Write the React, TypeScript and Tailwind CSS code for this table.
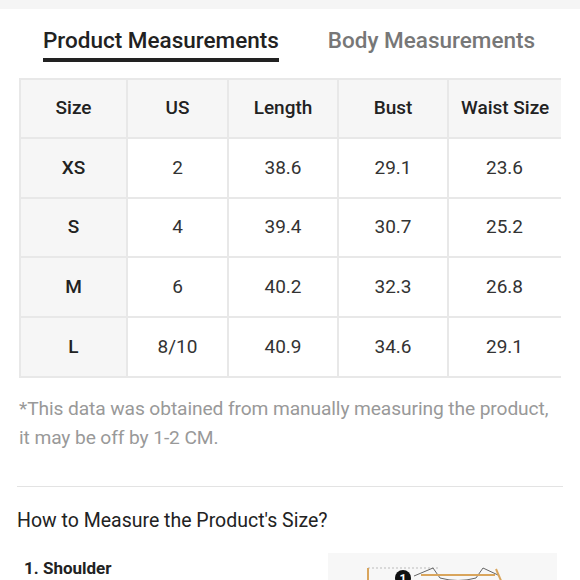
import React from "react";

const rows = [
  ["XS", "2", "38.6", "29.1", "23.6"],
  ["S", "4", "39.4", "30.7", "25.2"],
  ["M", "6", "40.2", "32.3", "26.8"],
  ["L", "8/10", "40.9", "34.6", "29.1"],
];

export default function App() {
  return (
    <div className="w-[580px] h-[580px] overflow-hidden bg-white" style={{ fontFamily: "Roboto, 'Liberation Sans', sans-serif" }}>
      <div className="h-[9px] bg-[#f5f5f5]" />
      <div className="flex items-start pt-[16px] pl-[43px] gap-[49px]">
        <div className="flex flex-col">
          <span className="text-[22.5px] leading-[30px] font-medium text-[#222]">Product Measurements</span>
          <div className="h-[4px] bg-[#222] mt-[3px]" />
        </div>
        <span className="text-[22.5px] leading-[30px] font-medium text-[#777]">Body Measurements</span>
      </div>
      <div className="ml-[19px] mt-[16px] w-[542px] overflow-hidden">
        <table className="border-collapse text-[19px] w-[600px] table-fixed">
          <colgroup>
            <col className="w-[107px]" />
            <col className="w-[101px]" />
            <col className="w-[110px]" />
            <col className="w-[110px]" />
            <col className="w-[172px]" />
          </colgroup>
          <thead>
            <tr className="h-[59px]">
              {["Size", "US", "Length", "Bust", "Waist Size"].map((h, i) => (
                <th key={h} className={`border-2 border-[#e8e8e8] bg-[#f6f6f6] font-medium text-[#222] ${i === 4 ? "text-left pl-[12px]" : "text-center"}`}>
                  {h}
                </th>
              ))}
            </tr>
          </thead>
          <tbody>
            {rows.map((r) => (
              <tr key={r[0]} className="h-[59.7px]">
                {r.map((c, i) => (
                  <td
                    key={i}
                    className={`border-2 border-[#e8e8e8] ${i === 0 ? "bg-[#f6f6f6] font-medium text-[#222] text-center" : "text-[#333] text-center"} ${i === 4 ? "text-left pl-[37px]" : ""}`}
                  >
                    {c}
                  </td>
                ))}
              </tr>
            ))}
          </tbody>
        </table>
      </div>
      <p className="ml-[19px] mr-[20px] mt-[16px] text-[19.2px] leading-[29px] tracking-[-0.1px] text-[#999]">
        *This data was obtained from manually measuring the product, it may be off by 1-2 CM.
      </p>
      <div className="mx-[17px] mt-[34px] h-[1px] bg-[#e3e3e3]" />
      <div className="ml-[17px] mt-[20px] text-[19.5px] leading-[28px] text-[#222]">How to Measure the Product's Size?</div>
      <div className="flex justify-between mt-[18px]">
        <div className="ml-[24px] mt-[5px] text-[17px] leading-[20px] font-bold text-[#222]">1. Shoulder</div>
        <div className="mr-[23px] w-[229px] h-[60px] bg-[#f7f7f7]">
          <svg width="229" height="60" viewBox="0 0 229 60">
            <line x1="40" y1="15" x2="110" y2="15" stroke="#bbb" strokeWidth="1" strokeDasharray="2 2" />
            <line x1="40" y1="15" x2="40" y2="60" stroke="#d9a55c" strokeWidth="2" />
            <path d="M86 23 L105 15 L112 25 Q130 30 148 25 L155 15 L170 22" fill="none" stroke="#666" strokeWidth="1" />
            <line x1="93" y1="22" x2="167" y2="22" stroke="#d9a55c" strokeWidth="2" />
            <line x1="168" y1="16" x2="174" y2="30" stroke="#d9a55c" strokeWidth="2" />
            <circle cx="75" cy="25" r="8" fill="#111" />
            <text x="75" y="30" textAnchor="middle" fontSize="12" fontWeight="bold" fill="#fff" fontFamily="Roboto, sans-serif">1</text>
          </svg>
        </div>
      </div>
    </div>
  );
}
